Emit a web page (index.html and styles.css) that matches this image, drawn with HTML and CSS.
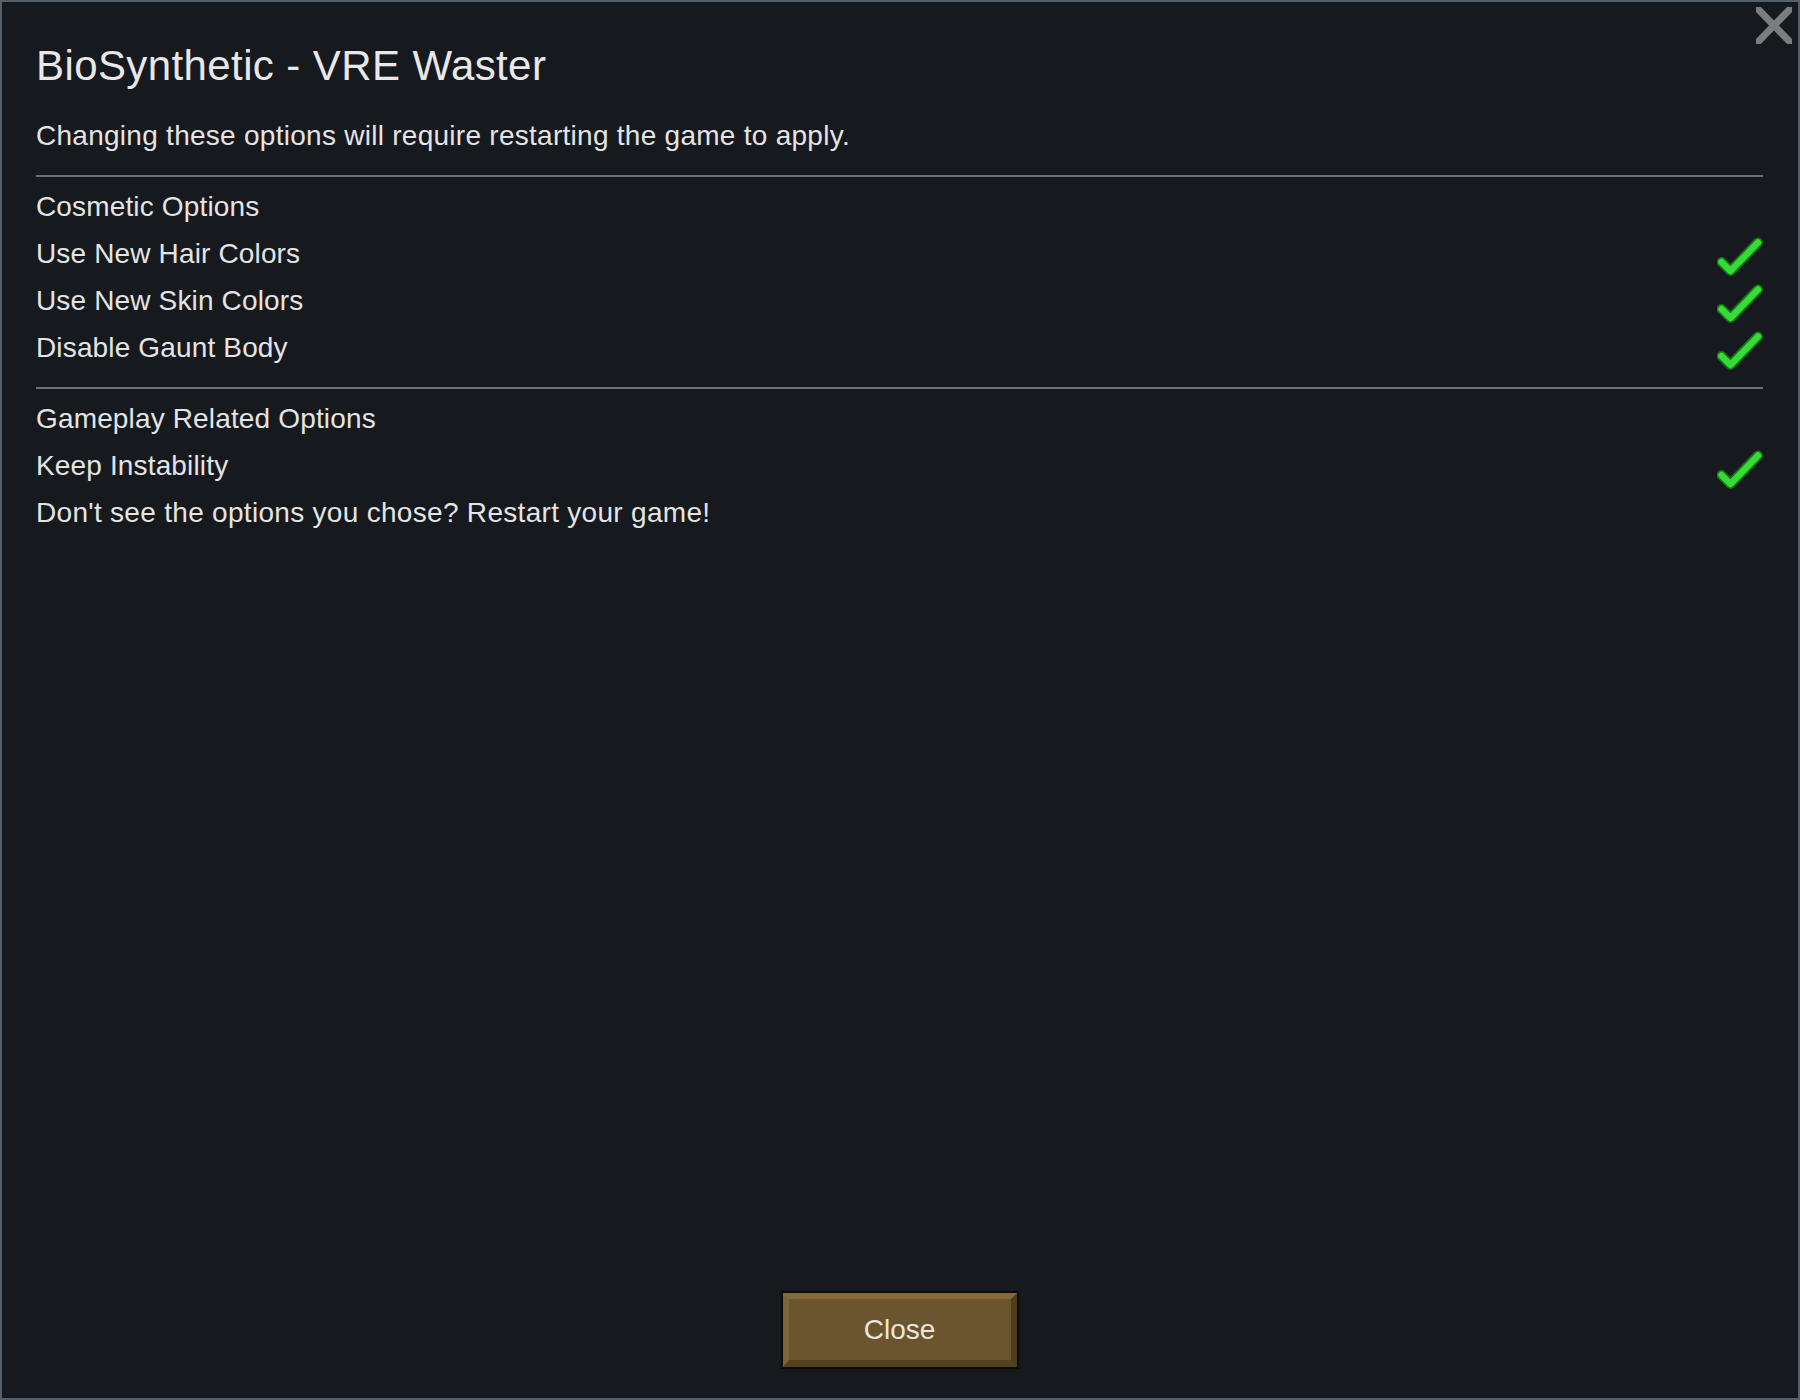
FILE: index.html
```html
<!DOCTYPE html>
<html lang="en">
<head>
<meta charset="utf-8">
<title>BioSynthetic - VRE Waster</title>
<link rel="stylesheet" href="styles.css">
</head>
<body>
<div class="window">
  <svg class="close-x" viewBox="0 0 36 37" width="36" height="37" aria-hidden="true">
    <line x1="0" y1="0" x2="36" y2="37" stroke="#7b7e81" stroke-width="7"/>
    <line x1="36" y1="0" x2="0" y2="37" stroke="#7b7e81" stroke-width="7"/>
  </svg>
  <div class="title">BioSynthetic - VRE Waster</div>
  <div class="subtitle">Changing these options will require restarting the game to apply.</div>
  <div class="rule rule-first"></div>
  <div class="section section-first">
    <div class="row">Cosmetic Options</div>
    <div class="row"><span>Use New Hair Colors</span><svg class="check" viewBox="0 0 46 40" width="46" height="40"><path d="M4.5 25 L13.5 34 L41 5.5" class="check-outline"/><path d="M4.5 25 L13.5 34 L41 5.5" class="check-fill"/></svg></div>
    <div class="row"><span>Use New Skin Colors</span><svg class="check" viewBox="0 0 46 40" width="46" height="40"><path d="M4.5 25 L13.5 34 L41 5.5" class="check-outline"/><path d="M4.5 25 L13.5 34 L41 5.5" class="check-fill"/></svg></div>
    <div class="row"><span>Disable Gaunt Body</span><svg class="check" viewBox="0 0 46 40" width="46" height="40"><path d="M4.5 25 L13.5 34 L41 5.5" class="check-outline"/><path d="M4.5 25 L13.5 34 L41 5.5" class="check-fill"/></svg></div>
  </div>
  <div class="rule rule-second"></div>
  <div class="section section-second">
    <div class="row">Gameplay Related Options</div>
    <div class="row"><span>Keep Instability</span><svg class="check" viewBox="0 0 46 40" width="46" height="40"><path d="M4.5 25 L13.5 34 L41 5.5" class="check-outline"/><path d="M4.5 25 L13.5 34 L41 5.5" class="check-fill"/></svg></div>
    <div class="row row-note">Don't see the options you chose? Restart your game!</div>
  </div>
  <div class="footer">
    <div class="button"><div class="button-face">Close</div></div>
  </div>
</div>
</body>
</html>
```

FILE: styles.css
```css
html, body {
  margin: 0;
  padding: 0;
  background: #16191e;
}

body {
  font-family: "Liberation Sans", Arial, sans-serif;
  color: #e4e4e4;
}

.window {
  position: relative;
  width: 1800px;
  height: 1400px;
  box-sizing: border-box;
  border: 2px solid #56606a;
  background: #16191e;
  padding: 0 35px 29px 34px;
  display: flex;
  flex-direction: column;
}

.close-x {
  position: absolute;
  top: 5px;
  right: 6px;
  display: block;
}

.title {
  margin-top: 38.9px;
  font-size: 42px;
  letter-spacing: 0.4px;
  line-height: 50px;
  color: #e8e8e8;
}

.subtitle {
  margin-top: 22.3px;
  font-size: 28px;
  letter-spacing: 0.27px;
  line-height: 46.67px;
}

.rule {
  height: 2px;
  background: #6e7276;
}

.rule-first {
  margin-top: 15.4px;
}

.rule-second {
  margin-top: 16.2px;
}

.section-first {
  margin-top: 5.7px;
}

.section-second {
  margin-top: 6px;
}

.row {
  height: 47px;
  font-size: 28px;
  letter-spacing: 0.15px;
  line-height: 47px;
  display: flex;
  justify-content: space-between;
  align-items: flex-start;
}

.row-note {
  letter-spacing: 0.3px;
}

.check {
  display: block;
  margin-top: 7.5px;
  margin-right: 0;
}

.check-outline {
  fill: none;
  stroke: #177317;
  stroke-width: 10;
  stroke-linecap: round;
  stroke-linejoin: round;
}

.check-fill {
  fill: none;
  stroke: #35dc35;
  stroke-width: 6.5;
  stroke-linecap: round;
  stroke-linejoin: round;
}

.footer {
  margin-top: auto;
  display: flex;
  justify-content: center;
}

.button {
  width: 238px;
  height: 78px;
  box-sizing: border-box;
  border: 2px solid #0c0c0c;
}

.button-face {
  height: 100%;
  box-sizing: border-box;
  border-style: solid;
  border-width: 6px 6px 7px 6px;
  border-color: #86693a #4e3c1d #54411f #7f6436;
  background: #6b5430;
  color: #ece7dc;
  font-size: 28px;
  display: flex;
  align-items: center;
  justify-content: center;
}
```
